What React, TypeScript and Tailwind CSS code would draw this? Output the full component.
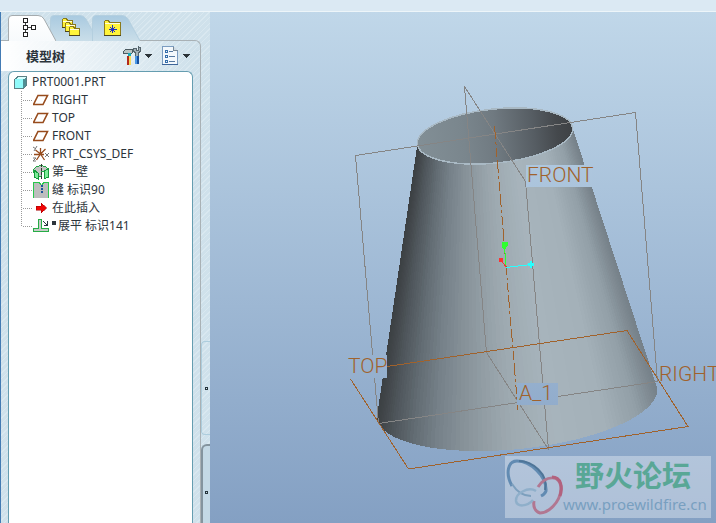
import type { ReactNode } from "react";

type Stop = [number, number[]];

const OUTER: Stop[] = [
  [0, [60, 64, 67]],
  [0.05, [78, 85, 90]],
  [0.12, [98, 108, 115]],
  [0.2, [118, 129, 137]],
  [0.32, [139, 150, 157]],
  [0.45, [156, 168, 175]],
  [0.62, [167, 180, 188]],
  [0.8, [164, 177, 185]],
  [0.92, [146, 159, 167]],
  [1, [118, 129, 137]],
];

const INNER: Stop[] = [
  [0, [130, 143, 150]],
  [0.3, [122, 134, 141]],
  [0.5, [112, 122, 129]],
  [0.75, [86, 93, 99]],
  [0.9, [68, 72, 76]],
  [1, [62, 65, 68]],
];

function shade(stops: Stop[], u: number) {
  let i = 0;
  while (i < stops.length - 2 && u > stops[i + 1][0]) i++;
  const [a, ca] = stops[i];
  const [b, cb] = stops[i + 1];
  const k = (u - a) / (b - a);
  return `rgb(${ca.map((v, n) => Math.round(v + (cb[n] - v) * k)).join(",")})`;
}

const TILT = (-6 * Math.PI) / 180;
function rim(cx: number, cy: number, rx: number, ry: number, a: number) {
  const x = rx * Math.cos(a);
  const y = ry * Math.sin(a);
  return [
    cx + x * Math.cos(TILT) - y * Math.sin(TILT),
    cy + x * Math.sin(TILT) + y * Math.cos(TILT),
  ];
}

const STRIPS = 90;
function coneStrips() {
  const out: ReactNode[] = [];
  for (let i = 0; i < STRIPS; i++) {
    const a = Math.PI * (1 - i / STRIPS);
    const b = Math.PI * (1 - Math.min(STRIPS, i + 2) / STRIPS);
    const pts = [
      rim(495, 136, 78, 27, a),
      rim(495, 136, 78, 27, b),
      rim(517, 403, 141, 46, b),
      rim(517, 403, 141, 46, a),
    ];
    const u = (1 - Math.cos((Math.PI * (i + 0.5)) / STRIPS)) / 2;
    out.push(<polygon key={i} points={pts.map((p) => p.join(",")).join(" ")} fill={shade(OUTER, u)} />);
  }
  return out;
}

function Scene() {
  return (
    <svg
      className="block h-[511px] w-[506px] shrink-0 overflow-hidden"
      viewBox="210 12 506 511"
      role="img"
      aria-label="Model view"
    >
      <defs>
        <linearGradient id="inner">
          {INNER.map(([o, c]) => (
            <stop key={o} offset={o} stopColor={`rgb(${c.join(",")})`} />
          ))}
        </linearGradient>
        <linearGradient id="sky" gradientUnits="userSpaceOnUse" x1="0" y1="12" x2="0" y2="523">
          <stop offset="0" stopColor="#c0d7e9" />
          <stop offset="1" stopColor="#84a0c3" />
        </linearGradient>
      </defs>
      <g shapeRendering="crispEdges">
        {coneStrips()}
        <ellipse cx="495" cy="136" rx="78" ry="27" transform="rotate(-6 495 136)" fill="url(#inner)" stroke="#a9b9c4" strokeWidth="1.5" />
        <g fill="none" stroke="#858585">
          <path d="M355.500 155.500L635.500 112.500L657.500 381.500L378.500 423.500Z" />
          <path d="M464.500 86.500L486.500 352.500L548.500 449.500L525.500 181.500Z" />
        </g>
        <g fill="none" stroke="#a0622c">
          <path d="M387 366.500L627 330.500L688 426.500L408.500 469L350.500 379" />
          <path d="M494.500 126L518 411" strokeDasharray="13 3 3 3 9 3" />
        </g>
        <path d="M506 267L504.500 246" stroke="#2fff2f" />
        <path d="M506 267L501 260" stroke="#ff3030" />
        <path d="M506 267.500L531 264.500" stroke="#28ffff" />
        <path d="M501.500 242h6v4l-2 3h-2l-2-3z" fill="#2fff2f" />
        <rect x="499" y="258" width="4" height="4" fill="#ff3030" />
        <path d="M528 263h2v-2h2v2h2v3h-2v2h-2v-2h-2z" fill="#28ffff" />
        <path d="M526 165h66v22h-66zM348 355h39v23h-39zM517 383h41v22h-41z" fill="url(#sky)" />
      </g>
      <g className="font-['Roboto','Liberation_Sans',sans-serif] text-[21px] font-light" fill="#a0622c">
        <text x="527" y="182">FRONT</text>
        <text x="348" y="373">TOP</text>
        <text x="659" y="381">RIGHT</text>
        <text x="519" y="400">A_1</text>
      </g>
      <rect x="505" y="456" width="206" height="62" fill="#fff" fillOpacity=".34" />
      <g fill="none">
        <path d="M512 486C505 473 508 461 517 461C530 461 547 476 546 491C545 494 543 495 541 496" stroke="#628bb2" strokeWidth="3" />
        <path d="M545 490C549 474 532 461 519 461" stroke="#4e7598" strokeWidth="2" />
        <path d="M512 484C517 492 524 496 531 496" stroke="#7c9fbd" strokeWidth="2" />
        <path d="M538 487C545 476 561 473 561 489C560 503 548 513 540 513C535 512 533 506 534 501" stroke="#b17791" strokeWidth="3" />
        <path d="M552 477C561 477 563 487 560 496" stroke="#b2627e" strokeWidth="3" />
        <path d="M536 491C528 486 515 494 516 501C517 507 527 507 533 500" stroke="#8fafca" strokeWidth="2.500" />
      </g>
      <text x="575" y="487" className="font-['Noto_Sans_CJK_SC',sans-serif] text-[29px] font-bold" fill="#59a796">野火论坛</text>
      <text x="563" y="510" className="font-['Noto_Sans',sans-serif] text-[15px]" fill="#789fc0">www.proewildfire.cn</text>
    </svg>
  );
}

function Folder({ x, y, w = 10, h = 8 }: { x: number; y: number; w?: number; h?: number }) {
  return (
    <g>
      <path
        d={`M${x + 0.5} ${y + h + 0.5}v-${h}l1-1h3l1 2h${w - 5}v${h - 1}z`}
        fill="#fff43a"
        stroke="#8a7a1c"
      />
      <path d={`M${x + 1} ${y + 2.5}h${w - 1}`} stroke="#fffde0" />
      <path d={`M${x} ${y + h + 0.5}h${w + 1}`} stroke="#4c431c" />
    </g>
  );
}

function TabShape({ active }: { active?: boolean }) {
  return (
    <svg className="absolute inset-0 h-full w-full" viewBox="0 0 48 26" preserveAspectRatio="none" aria-hidden="true">
      <defs>
        <linearGradient id={active ? "tabOn" : "tabOff"} x2="0" y2="1">
          <stop offset="0" stopColor={active ? "#ffffff" : "#a9cae0"} />
          <stop offset="1" stopColor={active ? "#f7fafc" : "#cadee9"} />
        </linearGradient>
      </defs>
      <path
        d="M.5 26V4Q.5 .5 4 .5H30Q34 .5 36 4L48 26"
        fill={active ? "url(#tabOn)" : "url(#tabOff)"}
        stroke={active ? "#a5abae" : "#b4cfdf"}
      />
    </svg>
  );
}

function Tab({ label, active, children }: { label: string; active?: boolean; children: ReactNode }) {
  return (
    <button type="button" role="tab" aria-selected={!!active} aria-label={label} className="relative h-[26px] w-[42px]">
      <span className={active ? "absolute inset-y-0 left-0 z-10 w-12" : "absolute inset-y-0 left-0 w-12"}>
        <TabShape active={active} />
        <svg className="absolute left-3 top-0" width="24" height="24" viewBox="0 0 24 24" shapeRendering="crispEdges" aria-hidden="true">
          {children}
        </svg>
      </span>
    </button>
  );
}

function Arrow() {
  return (
    <svg width="7" height="4" viewBox="0 0 7 4" shapeRendering="crispEdges" aria-hidden="true">
      <path d="M0 0h7L3.500 4z" fill="#2b3338" />
    </svg>
  );
}

const plane = <path d="M5 3.500h9.500l-4.500 9h-9.500z" fill="none" stroke="#974b1c" strokeWidth="1.600" shapeRendering="auto" />;

const items: { name: string; mark?: boolean; icon: ReactNode }[] = [
  { name: "RIGHT", icon: plane },
  { name: "TOP", icon: plane },
  { name: "FRONT", icon: plane },
  {
    name: "PRT_CSYS_DEF",
    icon: (
      <g fill="none" shapeRendering="auto">
        <path d="M7.500 2v6M1 8.500h10M7.500 8l5-5M7.500 8l-5-4M7.500 8l-4 6M7.500 8l4 6" stroke="#974b1c" strokeWidth="1.300" />
        <path d="M0 1l3 2M4 0L1 5M12 7l4 4M16 7l-4 4M0 12h3l-3 3h3" stroke="#777" />
      </g>
    ),
  },
  {
    name: "第一壁",
    icon: (
      <g>
        <path d="M.5 5.500L3.500 2.500L8 1.500L12.500 2.500L15.500 5.500V13L12 14.500V7H8.500V12H5.500V15.500L1.500 13z" fill="#c4c4c4" stroke="#20a644" />
        <path d="M1 6l4 3v6l-4-2zM11 7l4-2v8l-4 2z" fill="#7dec98" stroke="#159a3b" />
        <path d="M8 0v16" stroke="#333" strokeDasharray="3 1" />
      </g>
    ),
  },
  {
    name: "缝 标识90",
    icon: (
      <g>
        <path d="M0 0h6l2 2l2-2h6v16H0z" fill="#bdbdbd" />
        <path d="M.5 16V.5H6l2 2M9 2.500L11 .5h4.500V16" fill="none" stroke="#28c84c" strokeWidth="1.500" />
        <path d="M9 3v9" stroke="#1c559a" strokeWidth="2" strokeDasharray="2 1" />
      </g>
    ),
  },
  {
    name: "在此插入",
    icon: <path d="M3 6h5V3l6 5l-6 5v-3H3z" fill="#ef0505" stroke="#a30000" strokeWidth=".5" />,
  },
  {
    name: "展平 标识141",
    mark: true,
    icon: (
      <g>
        <path d="M.5 13.500v-3h5v-9h3v9h7v3z" fill="#c8ccc8" stroke="#26ad46" strokeWidth="1.500" />
        <path d="M10 3l4 4M14.500 3v4.500h-4" fill="none" stroke="#283640" />
      </g>
    ),
  },
];

function Tree() {
  return (
    <ul className="pt-px text-[12px] leading-[18px] text-[#2c343b]" aria-label="模型树">
      <li>
        <div className="flex h-[18px] items-center gap-[5px] pl-[5px]">
          <svg width="13" height="13" viewBox="0 0 13 13" shapeRendering="crispEdges" aria-hidden="true">
            <path d="M.5 3.500L3.500 .5h9v9l-3 3h-9z" fill="#4f8f94" stroke="#5d7f84" />
            <path d="M1 3h8v9H1z" fill="#91fafa" />
            <path d="M2 3l2-2h8l-2 2z" fill="#d9ffff" />
          </svg>
          <span>PRT0001.PRT</span>
        </div>
        <ul>
          {items.map((item, i) => (
            <li key={item.name} className="flex h-[18px] items-center whitespace-nowrap pl-3">
              <svg width="12" height="18" viewBox="0 0 12 18" shapeRendering="crispEdges" className="shrink-0" aria-hidden="true">
                <path d={i === items.length - 1 ? "M.5 0V9" : "M.5 0V18"} stroke="#9a9a9a" strokeDasharray="1 1" />
                <path d="M2 9.500H11" stroke="#9a9a9a" strokeDasharray="1 1" />
              </svg>
              <svg width="16" height="16" viewBox="0 0 16 16" shapeRendering="crispEdges" className="shrink-0" aria-hidden="true">
                {item.icon}
              </svg>
              {item.mark && <span className="mb-1.5 ml-[3px] h-1 w-1 bg-[#2c343b]" />}
              <span className={item.mark ? "ml-0.5" : "ml-[3px]"}>{item.name}</span>
            </li>
          ))}
        </ul>
      </li>
    </ul>
  );
}

export default function App() {
  return (
    <div className="flex min-h-screen flex-col bg-[#d1e2ec] font-['Noto_Sans','Noto_Sans_CJK_SC',sans-serif]">
      <div className="h-3 shrink-0 border-b border-[#edf5f9] bg-[#dbe9f3]" />
      <div className="flex grow">
        <aside className="flex w-[210px] shrink-0 border-l border-[#437bb4] bg-[repeating-linear-gradient(135deg,#cfe1eb_0px,#cfe1eb_3px,#d9e8f0_3px,#d9e8f0_4px)]">
          <div className="flex w-[200px] shrink-0 flex-col pt-[3px]">
            <div role="tablist" className="flex pl-[7px]">
              <Tab label="模型树" active>
                <path d="M5.500 5V21M7 12.500h5" stroke="#444" />
                <path d="M3.500 3.500h4v4h-4zM3.500 10.500h4v4h-4zM3.500 17.500h4v4h-4zM11.500 10.500h4v4h-4z" fill="#fff" stroke="#222" />
              </Tab>
              <Tab label="文件夹浏览器">
                <Folder x={0} y={4} />
                <Folder x={3} y={8} />
                <Folder x={7} y={12} />
              </Tab>
              <Tab label="收藏夹">
                <Folder x={0} y={6} w={16} h={14} />
                <path d="M8.500 10v8M4.500 14.500h8M6 12l5 5M11 12l-5 5" stroke="#1d2fc0" />
              </Tab>
            </div>
            <div className="-mt-px flex grow flex-col rounded-tr-md border-r border-t border-[#a9b1b5] pr-[7px]">
              <div className="flex h-[30px] items-center bg-linear-to-r from-white to-transparent pl-[25px]">
                <h1 className="w-24 text-[13px] font-bold leading-5 text-[#2c343b]">模型树</h1>
                <button type="button" aria-label="设置" className="flex items-center gap-[3px]">
                  <svg width="20" height="20" viewBox="0 0 20 20" shapeRendering="crispEdges" aria-hidden="true">
                    <path d="M1 6L4 3h6l1 3l-1 1H4L2 8z" fill="#b9c4c4" stroke="#4c5a60" strokeWidth="1" />
                    <path d="M6 7h3v4H6z" fill="#19a8b8" />
                    <path d="M5 10h2v9H5z" fill="#b32a1c" />
                    <path d="M7 10h2v9H7z" fill="#f7d85c" />
                    <path d="M11.500 2v3l2 2v4h3V7l2-2V2l-2-1v3h-2V2z" fill="#a4b1b8" stroke="#56656d" strokeWidth="1" />
                    <path d="M13 10h2v8h-2z" fill="#4a97e6" />
                    <path d="M15 10h2v8h-2z" fill="#174f9e" />
                  </svg>
                  <Arrow />
                </button>
                <button type="button" aria-label="显示" className="ml-2.5 flex items-center gap-1">
                  <svg width="17" height="20" viewBox="0 0 17 20" shapeRendering="crispEdges" aria-hidden="true">
                    <path d="M.5 .5h11l4 4v14H.5z" fill="#f3f8fc" stroke="#7b9cc0" />
                    <path d="M11.500 .5v4h4" fill="#cfdae4" stroke="#788894" />
                    <path d="M0 18.500h16" stroke="#3d6599" />
                    <path d="M7 5.500h4M7 10.500h6M7 15.500h6" stroke="#5679a0" />
                    <path d="M3 4.500h2v2H3zM3 9.500h2v2H3zM3 14.500h2v2H3z" fill="none" stroke="#366eaa" />
                  </svg>
                  <Arrow />
                </button>
              </div>
              <div className="ml-[7px] grow rounded-t-md border-x border-t border-[#659db0] bg-white">
                <Tree />
              </div>
            </div>
          </div>
          <div className="flex grow flex-col gap-[9px] pt-[329px]">
            <button type="button" aria-label="展开" className="flex h-[94px] items-center justify-center rounded-l border border-r-0 border-[#adcddd]">
              <span className="h-[3px] w-[3px] border border-[#26343b]" />
            </button>
            <button type="button" aria-label="收起" className="flex min-h-[79px] grow items-center justify-center rounded-tl-md border-l-2 border-t-2 border-[#84949e] bg-[#c4d9e5]">
              <span className="mt-4 h-[3px] w-[3px] border border-[#26343b]" />
            </button>
          </div>
        </aside>
        <main className="flex min-w-0 grow overflow-hidden bg-linear-to-b from-[#c0d7e9] to-[#84a0c3]">
          <Scene />
        </main>
      </div>
    </div>
  );
}
